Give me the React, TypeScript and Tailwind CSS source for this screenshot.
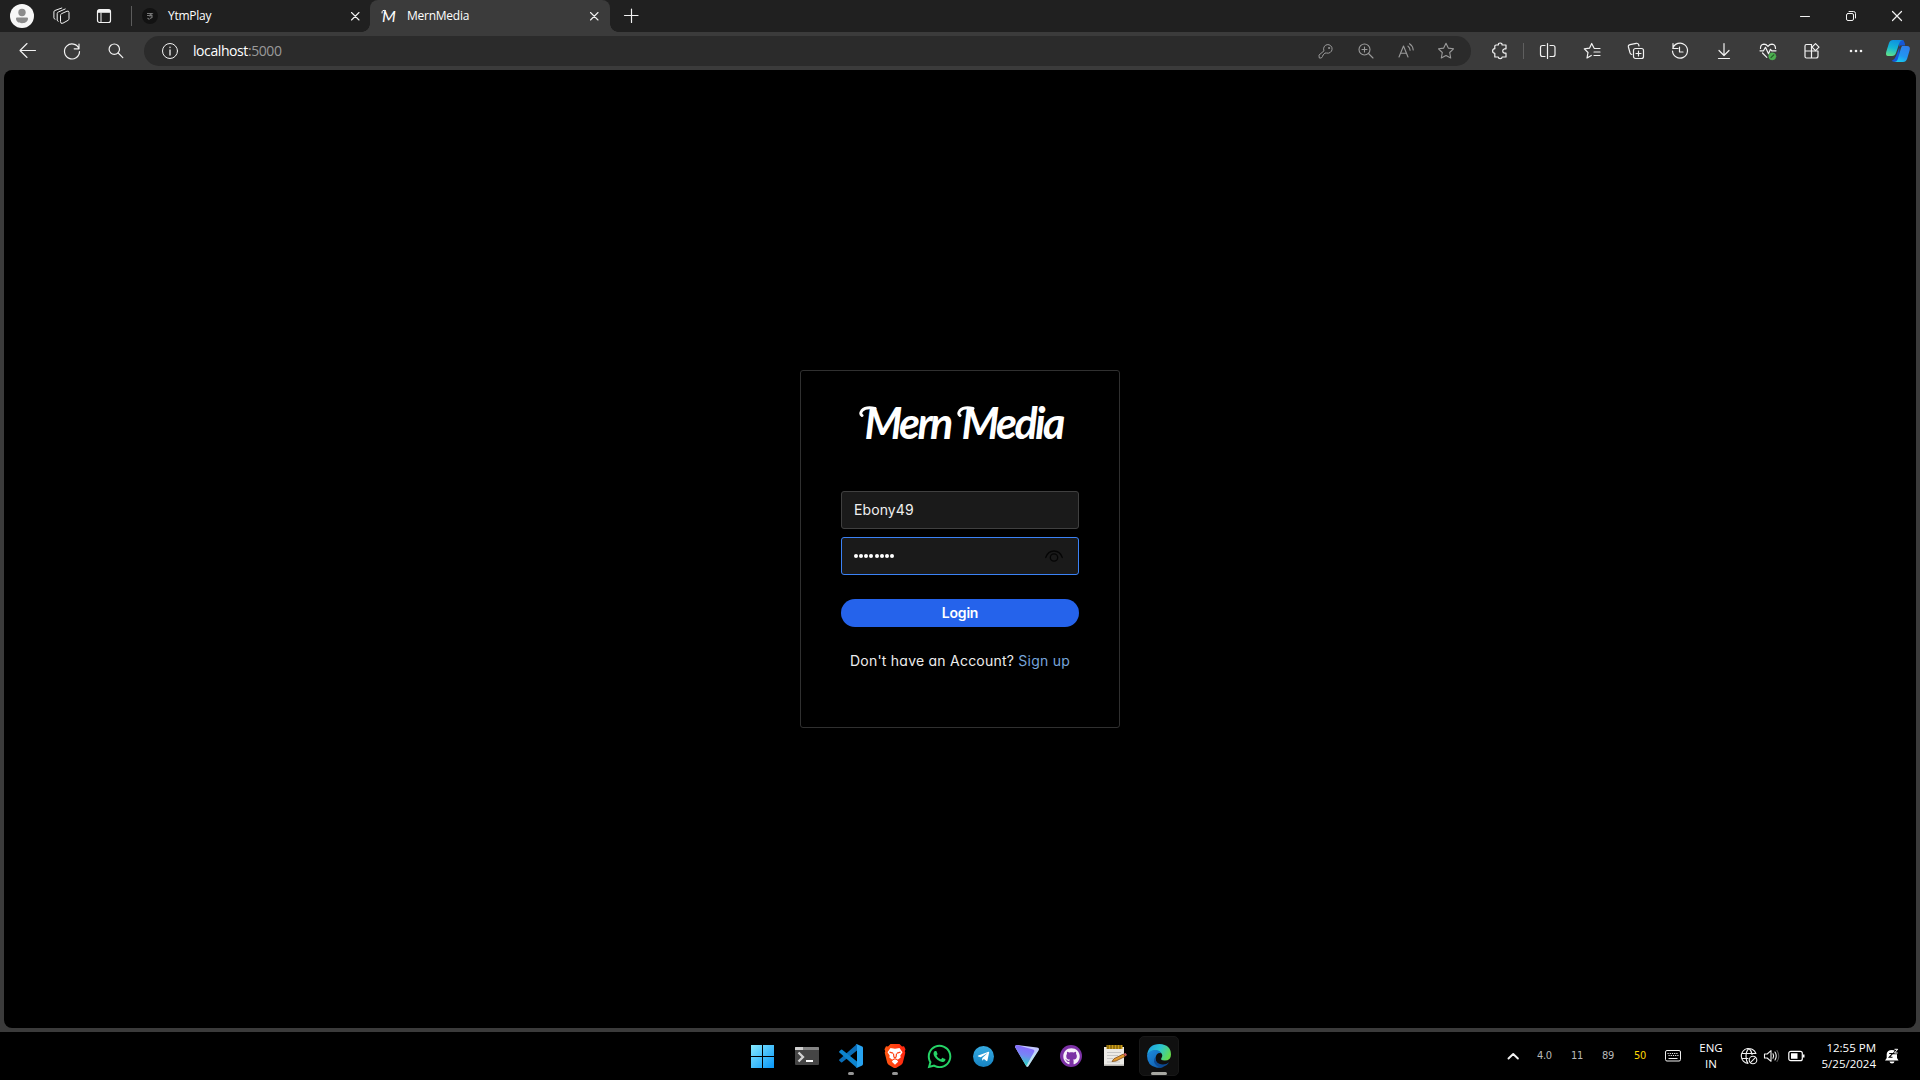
import React from "react";
import { FaGithub, FaWhatsapp, FaTelegramPlane } from "react-icons/fa";

type Kids = { children?: React.ReactNode };

/** Line icon on a 20px grid. */
function Line({ children, size = 20, sw = 1, color = "#f2f2f2" }: Kids & { size?: number; sw?: number; color?: string }) {
  return (
    <svg width={size} height={size} viewBox="0 0 20 20" fill="none" stroke={color} strokeWidth={sw} strokeLinecap="round" strokeLinejoin="round" className="block shrink-0">
      {children}
    </svg>
  );
}

const Slot44 = ({ children }: Kids) => <div className="flex h-full w-11 shrink-0 items-center justify-center">{children}</div>;
const Slot40 = ({ children }: Kids) => <div className="flex h-full w-10 shrink-0 items-center justify-center">{children}</div>;
const WindowButton = ({ children }: Kids) => <div className="flex h-full w-[46px] items-center justify-center">{children}</div>;

const CloseIcon = () => (
  <Line sw={1.1}>
    <path d="M6.500 6.500l7.500 7.500M14 6.500L6.500 14" />
  </Line>
);

function TabBar() {
  return (
    <div className="flex h-8 items-center bg-[#202020] text-[12px] text-white">
      <div className="ml-[10px] h-6 w-6">
        <svg width="24" height="24" viewBox="0 0 24 24">
          <circle cx="12" cy="12" r="12" fill="#f7f7f7" />
          <circle cx="12" cy="8.5" r="3.7" fill="#8c8c8c" />
          <path d="M6 14.6q0-1 1-1h10q1 0 1 1c0 3-2.700 4.700-6 4.700s-6-1.700-6-4.700z" fill="#8c8c8c" />
        </svg>
      </div>
      <div className="ml-[18px]">
        <Line>
          <path d="M8.500 9.200q0-1 1-1.500l5.500-2.500q2-.6 2 1.300v6.300q0 1-.9 1.500l-5.200 2.900q-2.400 1-2.400-1.200z" />
          <path d="M6.200 15.300q-1-.3-1-1.300V7.500q0-1 1-1.400l7-3.100" />
          <path d="M3 13.200q-1.100-.3-1.100-1.400V5.900q0-1 1-1.400L9.800 2" />
        </Line>
      </div>
      <div className="ml-[22px]">
        <Line sw={1.2}>
          <rect x="3.500" y="3.500" width="13" height="13" rx="2" />
          <path d="M4 5.300h12" strokeWidth="3" strokeLinecap="butt" />
          <path d="M7 7v9" strokeWidth="1" />
        </Line>
      </div>
      <div className="ml-[17px] h-5 w-px bg-[#5c5c5c]" />
      <div className="flex h-8 w-[238px] items-center">
        <div className="ml-[10px] flex h-4 w-4 items-center justify-center rounded-full bg-[#121212]">
          <svg width="10" height="10" viewBox="0 0 10 10" fill="none" stroke="#777" strokeWidth="1.100">
            <path d="M2 2.500h5L4.500 4.500H2M4 5l3-.5v2L5 7.500M2.500 7l2 1.500" />
          </svg>
        </div>
        <span className="ml-[10px] w-[177px] font-['Open_Sans',sans-serif] tracking-[-0.25px]">YtmPlay</span>
        <CloseIcon />
      </div>
      <div className="relative flex h-8 w-[240px] items-center rounded-t-lg bg-[#3b3b3b]">
        <div className="absolute bottom-0 -left-2 h-2 w-2 bg-[radial-gradient(circle_at_0_0,#202020_7.5px,#3b3b3b_8px)]" />
        <div className="absolute -right-2 bottom-0 h-2 w-2 bg-[radial-gradient(circle_at_100%_0,#202020_7.5px,#3b3b3b_8px)]" />
        <span className="relative ml-[12px] w-[25px] font-['Lato',sans-serif] text-[16px] leading-none italic">
          M
          <svg className="absolute top-[1px] -left-[1px]" width="5" height="6" viewBox="0 0 5 6" fill="none" stroke="#fff" strokeLinecap="round">
            <path d="M4.500 1.500Q.5.500 1 4" />
          </svg>
        </span>
        <span className="w-[177px] font-['Open_Sans',sans-serif] tracking-[-0.25px]">MernMedia</span>
        <CloseIcon />
      </div>
      <div className="ml-[11px]">
        <Line sw={1.2}>
          <path d="M3.500 9.500h13.500M10.500 3v13.500" />
        </Line>
      </div>
      <div className="ml-auto flex h-full">
        <WindowButton>
          <Line><path d="M5.500 10.500h9" /></Line>
        </WindowButton>
        <WindowButton>
          <Line>
            <rect x="5.500" y="7.500" width="7" height="7" rx="1.500" />
            <path d="M8 5.500h4.500q2 0 2 2V12" />
          </Line>
        </WindowButton>
        <WindowButton>
          <Line sw={1.2}><path d="M5.500 5.500l9 9M14.500 5.500l-9 9" /></Line>
        </WindowButton>
      </div>
    </div>
  );
}

const star = "M10 2.200l2.300 4.900 5.200.7-3.800 3.700 1 5.500L10 14.500 5.300 17l1-5.500L2.500 7.800l5.200-.7z";

function Toolbar() {
  const dim = "#9a9a9a";
  return (
    <div className="flex h-[38px] items-center bg-[#3b3b3b]">
      <div className="ml-[6px] flex h-full">
        <Slot44><Line sw={1.1}><path d="M17.500 9.500H2.500M9 2.500l-7 7 7 7" /></Line></Slot44>
        <Slot44><Line sw={1.2}><path d="M16.900 7.500A7.500 7.500 0 1 0 17.500 10.500M17 3v4.800h-4.800" /></Line></Slot44>
        <Slot44><Line sw={1.2}><circle cx="8.300" cy="8.200" r="5.200" /><path d="M12.200 12l4.600 4.600" /></Line></Slot44>
      </div>
      <div className="ml-[6px] flex h-[30px] w-[1327px] items-center rounded-full bg-[#2b2b2b]">
        <div className="ml-4">
          <Line>
            <circle cx="10" cy="10" r="7.500" />
            <path d="M10 9v5M10 6.200v.3" strokeWidth="1.300" />
          </Line>
        </div>
        <span className="mb-px ml-[13px] font-['Open_Sans',sans-serif] text-[14px] tracking-[-0.42px] text-white">
          localhost<span className="text-[#9a9a9a]">:5000</span>
        </span>
        <div className="mr-[5px] ml-auto flex h-full">
          <Slot40>
            <Line color={dim}>
              <path d="M7.800 9.500A4.300 4.300 0 1 1 10.500 12H9l-1 1.300-1 .7-.5 1.500L5.300 17H3.300L3 14.500z" />
              <circle cx="13" cy="7" r=".6" />
            </Line>
          </Slot40>
          <Slot40>
            <Line color={dim} sw={1.1}>
              <circle cx="8.500" cy="8.500" r="5.500" />
              <path d="M12.500 12.500l4.500 4.500M8.500 6v5M6 8.500h5" />
            </Line>
          </Slot40>
          <Slot40>
            <Line color={dim} sw={1.1}>
              <path d="M3 16L7.500 5 12 16M4.600 12.300h5.800M12 5.200q2 1.500 2.100 4M13.500 2.800q3.300 2 3.700 6.200" />
            </Line>
          </Slot40>
          <Slot40><Line color={dim} sw={1.1}><path d={star} /></Line></Slot40>
        </div>
      </div>
      <div className="ml-[7px] flex h-full items-center">
        <Slot44>
          <Line sw={1.2}>
            <path d="M6 4h2.300q0-2 1.900-2t1.900 2H16v3.800h-1.500q-1.800.3-1.800 2.200t1.800 2.200H16V16h-3.900q0 1.700-1.900 1.700T8.300 16H4.800v-3.700Q2.600 12 2.600 10t2.200-2.300V5q0-1 1.200-1z" />
          </Line>
        </Slot44>
        <div className="mr-[2px] ml-px h-4 w-px bg-[#5f5f5f]" />
        <Slot44>
          <Line sw={1.2}>
            <path d="M7 15.500H4.500q-2 0-2-2v-7q0-2 2-2H7M12 4.500h3q2 0 2 2v7q0 2-2 2h-3M9.500 2.500v15" />
          </Line>
        </Slot44>
        <Slot44>
          <Line sw={1.2}>
            <path d="M12 7L9.700 2.500 7.500 7.200l-5.200.7L6 11.500 5 17l4.300-2.500M12.500 7.500H18M12 11h6M12 14.500h6" />
          </Line>
        </Slot44>
        <Slot44>
          <Line sw={1.200}>
            <rect x="7.500" y="7.500" width="10" height="10" rx="2" />
            <path d="M12.500 10v5M10 12.500h5M13 5l-.4-1.500Q12 2 10.300 2.300L4 3.700Q2 4.200 2.400 6l1.700 6q.5 1.400 1.700 1.500" />
          </Line>
        </Slot44>
        <Slot44>
          <Line sw={1.2}><path d="M2.800 7.500A7.500 7.500 0 1 1 2.500 10M3 2.500v5h5M9.500 6v5H13" /></Line>
        </Slot44>
        <Slot44>
          <Line sw={1.2}><path d="M10 2.500v12M5 9.500l5 5 5-5" /><path d="M4.500 17.500h11" /></Line>
        </Slot44>
        <Slot44>
          <Line sw={1.200}>
            <path d="M2.500 7.500Q2.300 3.500 6 3.200q2.200 0 4 2.200 1.700-2.200 4-2.200 3.500.3 3.500 4.300M2 9.800h3.500l2-3.500 3 6.500 2-4.500 1.200 1.500H18M4.500 12l4.300 4.300" />
            <circle cx="14.300" cy="15.300" r="3.600" fill="#4caf50" stroke="#4caf50" strokeWidth=".5" />
            <path d="M13 16.700l2.800-2.800" stroke="#245a27" />
          </Line>
        </Slot44>
        <Slot44>
          <Line sw={1.200}>
            <path d="M4.500 3.500h5v6.500h6.500v5q0 2-2 2h-9.500q-1.500 0-1.500-1.500V5q0-1.500 1.500-1.500zM3 10h6.500v7" />
            <path d="M13.500 2.600l3.500 3.500-3.500 3.500L10 6.100z" />
          </Line>
        </Slot44>
        <Slot44>
          <Line>
            <g fill="#f2f2f2" stroke="none"><circle cx="5" cy="10" r="1.300" /><circle cx="10" cy="10" r="1.300" /><circle cx="15" cy="10" r="1.300" /></g>
          </Line>
        </Slot44>
        <Slot40>
          <svg width="26" height="24" viewBox="0 0 26 24">
            <defs>
              <linearGradient id="cpA" x1=".6" y1="0" x2=".3" y2="1"><stop offset="0" stopColor="#0f8fe0" /><stop offset=".5" stopColor="#12b5d6" /><stop offset="1" stopColor="#5fe08a" /></linearGradient>
              <linearGradient id="cpB" x1=".7" y1="0" x2=".3" y2="1"><stop offset="0" stopColor="#2f7fee" /><stop offset=".6" stopColor="#2196f0" /><stop offset="1" stopColor="#18cdf0" /></linearGradient>
            </defs>
            <path d="M14 4q1-3 4-3 1.500 1 2.200 5.500H15L11 17q-.8 3-4.500 5Q9 23 11 23l4-3z" fill="#1557d8" />
            <path d="M8 1h9.500Q14.700 2 14 5l-3 9q-1 3-4 3H3Q.3 17 1.200 13L4 4Q5 1 8 1z" fill="url(#cpA)" />
            <path d="M17 7h5q3.500 0 2.700 4l-2.500 8.500Q21 23 18 23H9q3 0 3.800-3L16 9z" fill="url(#cpB)" />
          </svg>
        </Slot40>
      </div>
    </div>
  );
}

/** Curled flourish that leads into each capital of the wordmark. */
const Swash = () => (
  <svg className="absolute top-[5px] -left-[1px]" width="20" height="15" viewBox="0 0 20 15" fill="none" stroke="#fff" strokeWidth="3" strokeLinecap="round">
    <path d="M17 2.500Q8 .5 4 4.500 1.500 8 4 9.500" />
  </svg>
);

function LoginCard() {
  return (
    <div className="flex h-[358px] w-[320px] flex-col items-center rounded-[3px] border border-[#303030] px-10 font-['Inter',sans-serif] text-[14px] [font-feature-settings:'cv11']">
      <h1 className="mt-[23px] flex h-[56px] w-[203px] items-center font-['Lato',sans-serif] text-[43px] leading-none font-bold tracking-[-2.6px] text-white italic">
        <span className="relative w-[98px] pl-[6px]">
          <Swash />
          Mern
        </span>
        <span className="relative w-[105px] pl-[5px]">
          <Swash />
          Media
        </span>
      </h1>
      <div className="mt-[41px] flex h-[38px] w-[238px] items-center rounded-[3px] border border-[#404040] bg-[#1a1a1a] px-3 pb-px tracking-[0.1px] text-[#f0f0f0]">
        Ebony49
      </div>
      <div className="mt-2 flex h-[38px] w-[238px] items-center justify-between rounded-[3px] border border-[#3b82f6] bg-[#1a1a1a] pr-[15px] pl-3">
        <div className="flex gap-[1.150px]">
          {Array.from({ length: 8 }, (_, i) => (
            <span key={i} className="h-1 w-1 rounded-full bg-white" />
          ))}
        </div>
        <svg width="18" height="12" viewBox="0 0 18 12" fill="none" stroke="#050505" strokeWidth="1.300" strokeLinecap="round">
          <path d="M.7 7.500Q3 1 9 1t8.300 6.500" />
          <circle cx="9" cy="7.500" r="3.700" />
        </svg>
      </div>
      <button className="mt-6 h-7 w-[238px] rounded-full bg-[#2563eb] pb-px text-[14px] font-semibold tracking-[-0.2px] text-white">Login</button>
      <p className="mt-[23px] tracking-[0.23px] whitespace-nowrap text-[#ededed]">
        Don't have an Account? <span className="text-[#77a5dc]">Sign up</span>
      </p>
    </div>
  );
}

function AppSlot({ children, running }: Kids & { running?: boolean }) {
  return (
    <div className="relative flex h-12 w-11 items-center justify-center">
      {children}
      {running && <span className="absolute bottom-[5px] h-[3px] w-[6px] rounded-full bg-[#969696]" />}
    </div>
  );
}

function TaskbarApps() {
  return (
    <>
      <AppSlot>
        <svg width="24" height="24" viewBox="0 0 24 24">
          <defs><linearGradient id="win" x1="0" y1="0" x2="1" y2="1"><stop offset="0" stopColor="#86eaff" /><stop offset="1" stopColor="#0796f8" /></linearGradient></defs>
          <path d="M0 1h11v11H0zM12 1h11v11H12zM0 13h11v11H0zM12 13h11v11H12z" fill="url(#win)" />
        </svg>
      </AppSlot>
      <AppSlot>
        <svg width="24" height="18" viewBox="0 0 24 18">
          <rect width="24" height="18" rx="1" fill="#454545" />
          <path d="M0 3V1q0-1 1-1h22q1 0 1 1v2z" fill="#858585" />
          <path d="M0 3V1q0-1 1-1h7v3z" fill="#cfcfcf" />
          <path d="M3.500 5.500L8 10l-4.500 4.500" fill="none" stroke="#d2d2d2" strokeWidth="2.300" />
          <path d="M11 14h7" stroke="#fff" strokeWidth="2" />
        </svg>
      </AppSlot>
      <AppSlot running>
        <svg width="24" height="24" viewBox="0 0 24 24">
          <path d="M18 0v6.500L3.200 18.300q-.6.400-1.200 0L.4 16.800q-.7-.7 0-1.300z" fill="#0a6db8" />
          <path d="M18 24v-6.500L3.200 5.700q-.6-.4-1.200 0L.4 7.200q-.7.700 0 1.300z" fill="#0d84cf" />
          <path d="M17 .2q.6-.3 1.200 0l5 2.400q.8.400.8 1.300v16.200q0 .9-.8 1.300l-5 2.400q-.9.400-1.600-.3 1.400.5 1.400-1V1.500q0-1.500-1.400-1z" fill="#27a3f1" />
        </svg>
      </AppSlot>
      <AppSlot running>
        <svg width="22" height="24" viewBox="0 0 22 24">
          <defs><linearGradient id="brv"><stop offset="0" stopColor="#ff5a12" /><stop offset="1" stopColor="#ff2410" /></linearGradient></defs>
          <path d="M6.500 0h9L18 2.500l2-.3 1.500 3-.7 2 .5 1.500-2.500 10Q18.300 20 17 21l-5 3h-2l-5-3q-1.300-1-1.800-2.300L.7 8.700l.5-1.500-.7-2 1.500-3 2 .3z" fill="url(#brv)" />
          <path d="M11 4.800L15.500 4l3 4.200-2.200 3.400.4 2-3.700 2.700 1.200 1.500L11 20.700l-3.200-2.900L9 16.300l-3.700-2.700.4-2-2.200-3.400 3-4.200z" fill="#fff" />
          <path d="M5.500 8.200l3.500.9M16.500 8.200L13 9.100M9.500 9.500l.4 3.500 1.100.7 1.100-.7.4-3.500M8.500 15.800l2.500-1 2.500 1" fill="none" stroke="#ff4012" strokeWidth="1.200" />
        </svg>
      </AppSlot>
      <AppSlot><FaWhatsapp size={27} color="#25d366" /></AppSlot>
      <AppSlot>
        <div className="flex h-[21px] w-[21px] items-center justify-center rounded-full bg-linear-to-b from-[#36abe2] to-[#1683c2]">
          <FaTelegramPlane size={13} color="#fff" />
        </div>
      </AppSlot>
      <AppSlot>
        <svg width="24" height="22" viewBox="0 0 24 22">
          <defs>
            <linearGradient id="pvA" x1=".7" y1="0" x2=".5" y2="1"><stop offset="0" stopColor="#8a63ff" /><stop offset=".5" stopColor="#7785f5" /><stop offset="1" stopColor="#22e0c0" /></linearGradient>
          </defs>
          <path d="M2 0l20 2.500q3 .5 1.500 3L13.500 21q-1.200 1.700-2.300 0L.3 2.500Q-.5.200 2 0z" fill="#c4c8ff" />
          <path d="M2 0l16 4.500q2 .6 1 2.500l-7.300 13.700q-.3.600-.7 0L.3 2.500Q-.5.200 2 0z" fill="url(#pvA)" />
          <path d="M24 4L13.500 21q-1.200 1.700-2.300 0L17 11z" fill="#b5f2e4" opacity=".6" />
        </svg>
      </AppSlot>
      <AppSlot>
        <div className="flex h-[22px] w-[22px] items-center justify-center rounded-full bg-[#7c31a5]">
          <FaGithub size={17} color="#f7f0fa" />
        </div>
      </AppSlot>
      <AppSlot>
        <svg width="24" height="22" viewBox="0 0 24 22">
          <path d="M1 2h20v19H1z" fill="#eceae6" />
          <path d="M1 19.500h20V21H1z" fill="#b5b3ae" />
          <path d="M3.500 0h16v4h-16z" fill="#c99b16" />
          <path d="M5 0v4M8 0v4M11 0v4M14 0v4M17 0v4" stroke="#5f4608" strokeWidth="1" />
          <path d="M4 7.500h14M4 10.500h11M4 13.500h6M4 17h13" stroke="#c5c5c5" />
          <path d="M9 16.500l2-2.800L20.500 9l1.500 2.500-9 4.500z" fill="#e49b31" stroke="#7c4a15" strokeWidth=".8" />
          <path d="M20.500 9l2-1 1.500 2-1.500 1.300z" fill="#d35c63" />
        </svg>
      </AppSlot>
      <div className="relative ml-[2px] flex h-10 w-10 items-center justify-center rounded-[5px] border border-[#181818] bg-[#101010]">
        <svg width="24" height="24" viewBox="0 0 24 24">
          <defs>
            <linearGradient id="egA" x1="0" y1=".2" x2="1" y2=".6"><stop offset="0" stopColor="#1b9fe3" /><stop offset=".5" stopColor="#2cc5cf" /><stop offset="1" stopColor="#65dc4a" /></linearGradient>
            <linearGradient id="egB" x1="0" y1="0" x2=".8" y2="1"><stop offset="0" stopColor="#1d8de0" /><stop offset="1" stopColor="#0f5dac" /></linearGradient>
          </defs>
          <path d="M0 11Q1.500 0 12.500 0 24 .8 24 10.500q0 6-6.300 6-5-.2-3.200-2.500 1.800-2.700-.5-5.200Q7.500 3.500 0 11z" fill="url(#egA)" />
          <path d="M0 11.500Q2 6 8.300 6q4.200.1 6 3.300Q9.500 8 8.500 14q0 7.500 7.500 9-3 1.200-6 .7Q0 22 0 11.500z" fill="url(#egB)" />
          <path d="M8.500 12.500q-1 5 3.700 7.200 5.300 2 10-1.500Q20 22 16 23q-3 .8-6-1-5-4-1.500-9.500z" fill="#0c4a94" />
        </svg>
        <span className="absolute bottom-0 h-[3px] w-4 rounded-full bg-[#a8a8a2]" />
      </div>
    </>
  );
}

function Tray() {
  return (
    <div className="ml-auto flex h-12 items-center text-[#b8b8b8]">
      <div className="mr-[14px]"><Line sw={1.900}><path d="M5.500 12.500L10.200 8l4.700 4.500" /></Line></div>
      <div className="mb-px flex font-['DejaVu_Sans_Condensed','DejaVu_Sans',sans-serif] text-[11px] leading-none tracking-[-0.300px]">
        <span className="w-[34px]">4.0</span>
        <span className="w-[31px]">11</span>
        <span className="w-[32px]">89</span>
        <span className="w-[31px] text-[#ffd800]">50</span>
      </div>
      <svg width="16" height="12" viewBox="0 0 16 12" fill="none" stroke="#eee" className="block">
        <rect x=".5" y=".5" width="15" height="10.500" rx="1.500" />
        <path d="M2.500 3.500h11M3.500 5.500h10" strokeDasharray="1.200 1" />
        <path d="M3.500 8.500h9" />
      </svg>
      <div className="ml-[15px] w-[30px] text-center font-['Open_Sans',sans-serif] text-[11.500px] leading-4 text-white">
        ENG<br />IN
      </div>
      <div className="ml-[13px] flex items-center">
        <Line sw={1.100}>
          <path d="M16.900 7.500A7.500 7.500 0 1 0 9 17.400M3 7.500h14M3 12.500h6M10 2.500q-3 2.500-3 7.500t2 7.400M10 2.500q2.500 2 3 6" />
          <circle cx="14" cy="14" r="3.800" /><path d="M11.400 16.600l5.200-5.200" />
        </Line>
        <div className="ml-[3px]">
          <Line sw={1.1}>
            <path d="M2.500 8h2.700L9 4.700v10.600L5.200 12H2.500zM11 7.800q1.200 2.200 0 4.400M13 6q2.500 4 0 8" />
            <path d="M15 4.500q3.600 5.500 0 11" stroke="#555" />
          </Line>
        </div>
        <svg className="ml-[6px] block" width="18" height="12" viewBox="0 0 18 12">
          <rect x=".8" y="1.300" width="13.500" height="9.400" rx="2" fill="none" stroke="#fff" strokeWidth="1.200" />
          <path d="M3 3.300h6.500v5.400H3zM15 4.500h1.500v3H15z" fill="#fff" />
        </svg>
      </div>
      <div className="ml-[15px] w-[55px] font-['Open_Sans',sans-serif] text-[11.500px] leading-4 whitespace-nowrap text-white">
        <div className="flex justify-end">12:55 PM</div>
        <div className="flex justify-end">5/25/2024</div>
      </div>
      <svg className="mr-[20px] ml-2 block" width="16" height="16" viewBox="0 0 16 16">
        <path d="M1 12.500l1.700-2.500V6Q3.200 2 8 2q4 0 5 3.500V10l1.500 2.500zM5.500 13.500h5q-.3 2-2.500 2t-2.500-2z" fill="#fff" />
        <path d="M5.200 5.500h3.300L5.200 9.300h3.300" fill="none" stroke="#000" strokeWidth="1.100" />
        <path d="M10.500 1.300h3.200l-3.200 3.700h3.200" fill="none" stroke="#000" strokeWidth="2.400" />
        <path d="M10.500 1.300h3.200l-3.200 3.700h3.200" fill="none" stroke="#fff" />
      </svg>
    </div>
  );
}

export default function App() {
  return (
    <div className="flex h-[1080px] w-[1920px] flex-col overflow-hidden bg-[#3b3b3b]">
      <TabBar />
      <Toolbar />
      <main className="mx-1 mb-1 flex h-[958px] flex-col items-center rounded-lg bg-black pt-[300px]">
        <LoginCard />
      </main>
      <footer className="flex h-12 items-center bg-black pl-[741px]">
        <TaskbarApps />
        <Tray />
      </footer>
    </div>
  );
}
